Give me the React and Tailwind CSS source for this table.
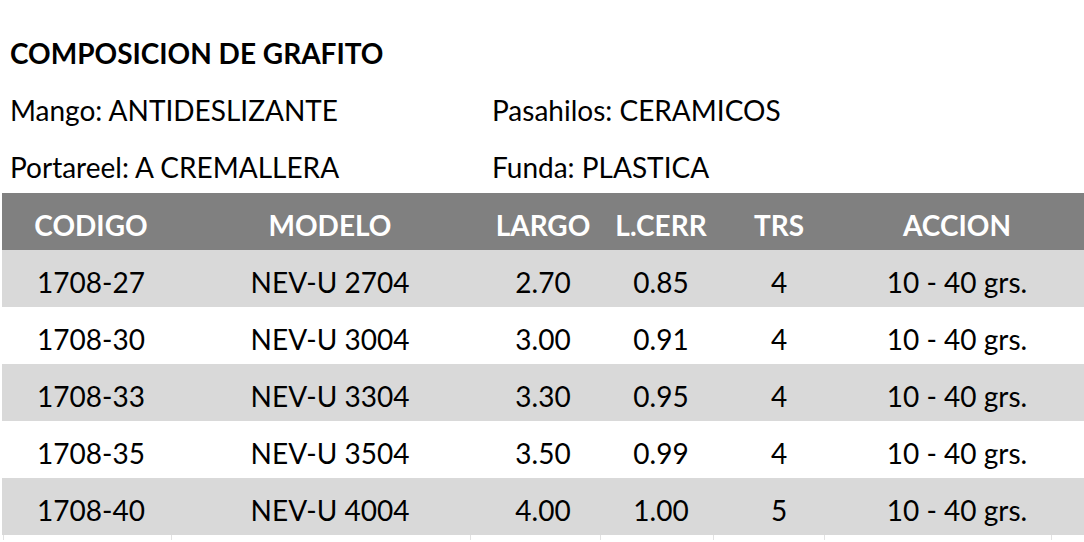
const rows = [
  { codigo: '1708-27', modelo: 'NEV-U 2704', largo: '2.70', cerr: '0.85', trs: '4', accion: '10 - 40 grs.' },
  { codigo: '1708-30', modelo: 'NEV-U 3004', largo: '3.00', cerr: '0.91', trs: '4', accion: '10 - 40 grs.' },
  { codigo: '1708-33', modelo: 'NEV-U 3304', largo: '3.30', cerr: '0.95', trs: '4', accion: '10 - 40 grs.' },
  { codigo: '1708-35', modelo: 'NEV-U 3504', largo: '3.50', cerr: '0.99', trs: '4', accion: '10 - 40 grs.' },
  { codigo: '1708-40', modelo: 'NEV-U 4004', largo: '4.00', cerr: '1.00', trs: '5', accion: '10 - 40 grs.' }
];

const headers = ['CODIGO', 'MODELO', 'LARGO', 'L.CERR', 'TRS', 'ACCION'];

const cols = 'grid grid-cols-[178px_300px_126px_110px_126px_230px] pr-[11px]';

const App = () => {
  return (
    <div className="h-[542px] w-[1084px] overflow-hidden bg-white pt-[22px] text-[28px] text-black [font-family:Lato,'Liberation_Sans',sans-serif]">
      <div className="flex h-[57px] items-center pl-[10px] pt-[5px] font-bold">COMPOSICION DE GRAFITO</div>
      <div className="grid h-[57px] grid-cols-[482px_1fr] items-center pl-[10px] pt-[5px]">
        <span>Mango: ANTIDESLIZANTE</span>
        <span>Pasahilos: CERAMICOS</span>
      </div>
      <div className="grid h-[57px] grid-cols-[482px_1fr] items-center pl-[10px] pt-[5px]">
        <span>Portareel: A CREMALLERA</span>
        <span>Funda: PLASTICA</span>
      </div>

      <div className="ml-[2px]">
        <div className={`${cols} h-[57px] items-center bg-[#808080] pt-[6px] font-bold text-white`}>
          {headers.map((h) => (
            <div key={h} className="text-center">{h}</div>
          ))}
        </div>
        {rows.map((row, index) => (
          <div
            key={row.codigo}
            className={`${cols} h-[57px] items-center pt-[6px] ${index % 2 === 0 ? 'bg-[#d9d9d9]' : 'bg-white'}`}
          >
            <div className="text-center">{row.codigo}</div>
            <div className="text-center">{row.modelo}</div>
            <div className="text-center">{row.largo}</div>
            <div className="text-center">{row.cerr}</div>
            <div className="text-center">{row.trs}</div>
            <div className="text-center">{row.accion}</div>
          </div>
        ))}
      </div>

      {/* spreadsheet gridlines peeking out under the table */}
      <div className="flex h-[5px] pl-[3px]">
        <div className="w-[168px] border-l border-[#e2e2e2]" />
        <div className="w-[299px] border-l border-[#e2e2e2]" />
        <div className="w-[130px] border-l border-[#e2e2e2]" />
        <div className="w-[113px] border-l border-[#e2e2e2]" />
        <div className="w-[111px] border-l border-[#e2e2e2]" />
        <div className="w-[228px] border-x border-[#e2e2e2]" />
      </div>
    </div>
  );
};

export default App;
